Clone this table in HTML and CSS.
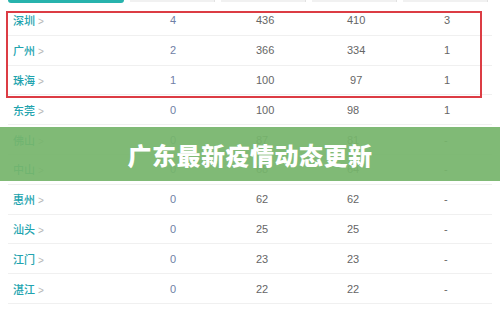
FILE: index.html
```html
<!DOCTYPE html>
<html>
<head>
<meta charset="utf-8">
<link rel="stylesheet" href="styles.css">
</head>
<body>
<div class="page">
  <div class="tabs">
    <div class="tab active"></div>
    <div class="tab"></div>
    <div class="tab"></div>
    <div class="tab"></div>
    <div class="tab"></div>
  </div>
  <div class="table">
    <div class="row"><div class="city">深圳<span class="chev">&gt;</span></div><div class="n new">4</div><div class="n">436</div><div class="n">410</div><div class="n">3</div></div>
    <div class="row"><div class="city">广州<span class="chev">&gt;</span></div><div class="n new">2</div><div class="n">366</div><div class="n">334</div><div class="n">1</div></div>
    <div class="row"><div class="city">珠海<span class="chev">&gt;</span></div><div class="n new">1</div><div class="n">100</div><div class="n">&nbsp;97</div><div class="n">1</div></div>
    <div class="row"><div class="city">东莞<span class="chev">&gt;</span></div><div class="n new">0</div><div class="n">100</div><div class="n">98</div><div class="n">1</div></div>
    <div class="row"><div class="city">佛山<span class="chev">&gt;</span></div><div class="n new">0</div><div class="n">87</div><div class="n">81</div><div class="n">-</div></div>
    <div class="row"><div class="city">中山<span class="chev">&gt;</span></div><div class="n new">0</div><div class="n">68</div><div class="n">64</div><div class="n">-</div></div>
    <div class="row"><div class="city">惠州<span class="chev">&gt;</span></div><div class="n new">0</div><div class="n">62</div><div class="n">62</div><div class="n">-</div></div>
    <div class="row"><div class="city">汕头<span class="chev">&gt;</span></div><div class="n new">0</div><div class="n">25</div><div class="n">25</div><div class="n">-</div></div>
    <div class="row"><div class="city">江门<span class="chev">&gt;</span></div><div class="n new">0</div><div class="n">23</div><div class="n">23</div><div class="n">-</div></div>
    <div class="row"><div class="city">湛江<span class="chev">&gt;</span></div><div class="n new">0</div><div class="n">22</div><div class="n">22</div><div class="n">-</div></div>
  </div>
  <div class="highlight"></div>
  <div class="banner">广东最新疫情动态更新</div>
</div>
</body>
</html>
```

FILE: styles.css
```css
html, body {
  margin: 0;
  padding: 0;
  background: #fff;
}
.page {
  position: relative;
  width: 500px;
  height: 309px;
  overflow: hidden;
  font-family: "Liberation Sans", Arial, "Noto Sans CJK SC", sans-serif;
}
.tabs {
  display: flex;
  height: 6px;
  padding-left: 8px;
  gap: 6px;
}
.tab {
  flex: 0 0 84px;
  height: 2px;
  background: #f1f1f1;
  border-right: 1px solid #e2e2e2;
}
.tab.active {
  flex: 0 0 116px;
  height: 3px;
  background: #27b3ad;
  border: none;
  border-radius: 0 0 3px 3px;
}
.table {
  margin-left: 8px;
  width: 484px;
}
.row {
  display: grid;
  grid-template-columns: 157px 86px 91px 97px 53px;
  height: 29.8px;
  align-items: center;
  border-bottom: 1px solid #f0f0f0;
  box-sizing: border-box;
}
.city {
  padding-left: 5px;
  font-family: "Noto Sans CJK SC", sans-serif;
  font-size: 11px;
  font-weight: 500;
  color: #21a3ae;
}
.chev {
  margin-left: 3px;
  color: #b5b5b5;
  font-family: "Liberation Sans", sans-serif;
  font-size: 10px;
  font-weight: 400;
}
.n {
  padding-left: 5px;
  font-size: 11px;
  color: #666;
  white-space: pre;
}
.n.new {
  color: #6f80a6;
}
.highlight {
  position: absolute;
  left: 6px;
  top: 11px;
  width: 476px;
  height: 87px;
  border: 2px solid #dc3c44;
  box-sizing: border-box;
}
.banner {
  position: absolute;
  left: 0;
  top: 127px;
  width: 500px;
  height: 54px;
  background: rgba(118, 181, 108, 0.93);
  display: flex;
  align-items: center;
  justify-content: center;
  color: #fff;
  font-family: "Noto Sans CJK SC", sans-serif;
  font-weight: 900;
  font-size: 24px;
  letter-spacing: 0.5px;
}
```
